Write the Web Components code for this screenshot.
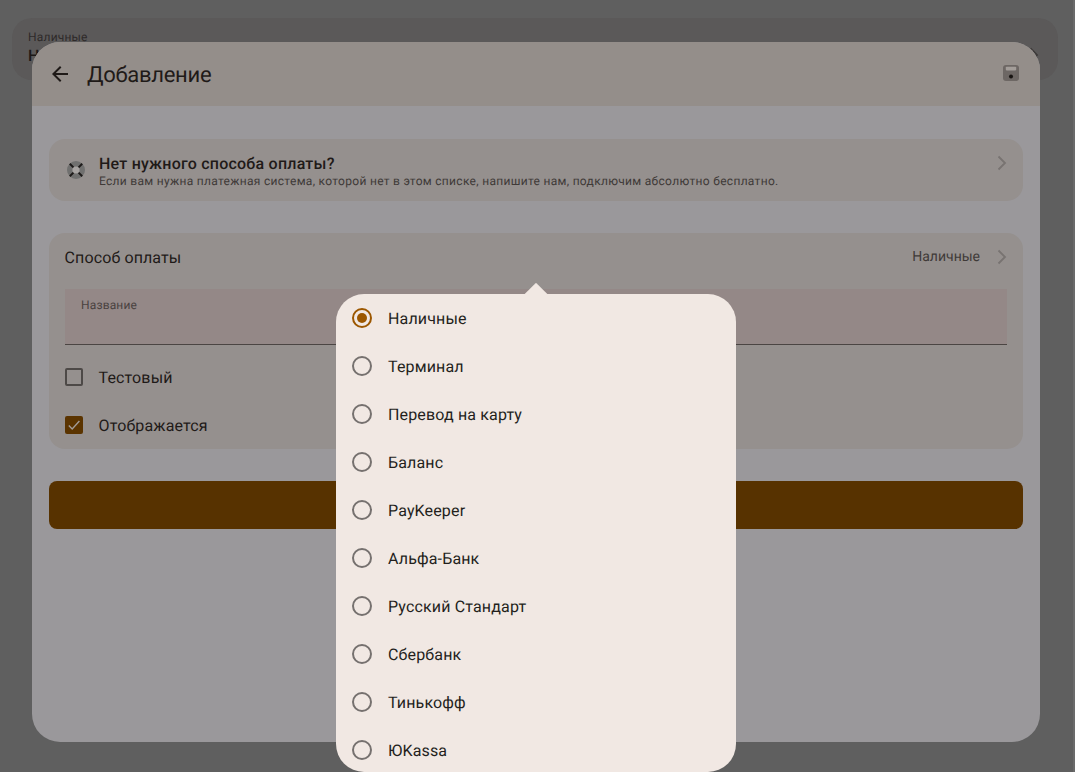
<!DOCTYPE html>
<html lang="ru"><head><meta charset="utf-8"><title>Добавление</title>
<style>
html,body{margin:0;padding:0;height:100%;overflow:hidden}
body{background:#5f5f5f;font-family:Roboto,"Liberation Sans",sans-serif;color:#211c1a;text-rendering:geometricPrecision}
</style></head><body>
<app-screen>
  <behind-card></behind-card>
  <add-dialog></add-dialog>
  <radio-menu></radio-menu>
</app-screen>
<script>
const chev='<svg width="24" height="24" viewBox="0 0 24 24" fill="none" stroke="#787371" stroke-width="1.8"><path d="M8.5 5.5l6.5 6.5-6.5 6.5"/></svg>';
function def(name,html){customElements.define(name,class extends HTMLElement{constructor(){super();this.attachShadow({mode:'open'}).innerHTML=html;}});}

def('app-screen',`<style>:host{display:block;position:relative;width:1075px;height:772px;overflow:hidden;background:#5f5f5f}
.sb{position:absolute;right:0;top:0;bottom:0;width:2px;background:#6a6a6a}</style><slot></slot><div class="sb"></div>`);

def('behind-card',`<style>:host{display:flex;box-sizing:border-box;position:absolute;left:12px;top:18px;width:1046px;height:62px;background:#5b5959;border-radius:20px;padding:11px 16px;align-items:flex-start;justify-content:space-between}
.s{font-size:12px;line-height:16px;color:#2e2a29;letter-spacing:.2px}.b{font-size:16px;line-height:22px;color:#1c1817;font-weight:500}
.c{margin:14px -4px 0 0}</style><div><div class="s">Наличные</div><div class="b">Наличные</div></div><div class="c">${chev.replace('#787371','#3d3a39')}</div>`);

def('add-dialog',`<style>:host{display:flex;flex-direction:column;position:absolute;left:32px;top:42px;width:1008px;height:700px;background:#9a989b;border-radius:28px;overflow:hidden}
header{height:64px;flex:none;background:#948e8a;display:flex;align-items:center;padding:0 20px 0 4px}
.ib{width:48px;height:48px;display:flex;align-items:center;justify-content:center}
h1{flex:1;margin:3px 0 0 3px;font-size:22px;font-weight:400;line-height:28px;color:#1f1a18;letter-spacing:-.3px}
.sv{margin-top:-2px}
main{flex:1;padding:33px 17px 0;display:flex;flex-direction:column;gap:32px}
</style>
<header><div class="ib"><svg width="24" height="24" viewBox="0 0 24 24" fill="#1f1a18"><path d="M20 11H7.83l5.59-5.59L12 4l-8 8 8 8 1.41-1.41L7.83 13H20v-2z"/></svg></div>
<h1>Добавление</h1>
<svg class="sv" width="18" height="18" viewBox="0 0 18 18"><rect x="1" y="1" width="16" height="16" rx="3" fill="#6d6764"/><rect x="3.8" y="2.8" width="10.4" height="3.6" rx=".8" fill="#a39d99"/><circle cx="9" cy="12.4" r="2" fill="#181412"/></svg>
</header>
<main><help-card></help-card><method-card></method-card><save-button></save-button></main>`);

def('help-card',`<style>:host{display:flex;height:62px;background:#95908e;border-radius:16px;padding:0 9px 0 16px;align-items:flex-start;box-sizing:border-box}
.i{width:22px;height:62px;display:flex;align-items:center;margin:0 12px 0 0}
.t{flex:1;padding-top:15px}
.a{font-size:16px;line-height:20px;font-weight:500;color:#1f1a18;letter-spacing:.22px}
.d{font-size:12px;line-height:16px;color:#3f3a38;margin-top:-1px;letter-spacing:.3px}
.c{margin-top:12px}</style>
<div class="i"><svg width="22" height="22" viewBox="0 0 22 22"><circle cx="11" cy="11" r="9" fill="#70706f"/><circle cx="11" cy="11" r="3.6" fill="#a8a4a2"/><path d="M4.8 4.8l3.6 3.6M17.2 4.8l-3.6 3.6M4.8 17.2l3.6-3.6M17.2 17.2l-3.6-3.6" stroke="#1d1a19" stroke-width="2"/></svg></div>
<div class="t"><div class="a">Нет нужного способа оплаты?</div><div class="d">Если вам нужна платежная система, которой нет в этом списке, напишите нам, подключим абсолютно бесплатно.</div></div>
<div class="c">${chev}</div>`);

def('method-card',`<style>:host{display:block;height:216px;background:#95908e;border-radius:16px;padding:0 16px;box-sizing:border-box}
.row{height:48px;display:flex;align-items:center;font-size:16px;color:#1f1a18}
.row span{flex:1;letter-spacing:.1px;margin-left:-.4px}.row b{font-weight:400;font-size:14px;color:#3f3a38;margin-right:10px}
.c{margin-right:-7px;height:24px}
.f{margin-top:8px;height:56px;box-sizing:border-box;background:#948887;border-bottom:1px solid #4b4543;padding:8px 16px;font-size:12px;line-height:16px;color:#4a4240;letter-spacing:.15px}
.chk{height:48px;display:flex;align-items:center;gap:15.5px;font-size:16px;color:#1f1a18;letter-spacing:.15px}
.first{margin-top:8px}
.box{width:18px;height:18px;box-sizing:border-box;border:2px solid #4d4947;border-radius:2px;flex:none}
.on{background:#5b3400;border:none;display:flex;align-items:center;justify-content:center}
</style>
<div class="row"><span>Способ оплаты</span><b>Наличные</b><div class="c">${chev}</div></div>
<div class="f">Название</div>
<div class="chk first"><div class="box"></div>Тестовый</div>
<div class="chk"><div class="box on"><svg width="14" height="14" viewBox="0 0 14 14" fill="none" stroke="#a29c98" stroke-width="1.4"><path d="M1.8 7.5l3.4 3.4L12.4 3"/></svg></div>Отображается</div>`);

def('save-button',`<style>:host{display:block;height:48px;background:#573200;border-radius:8px}</style>`);

def('radio-item',`<style>:host{display:flex;height:48px;align-items:center;padding-left:16px;gap:16px;font-size:16px;color:#241f1c;letter-spacing:.15px}
.r{width:20px;height:20px;box-sizing:border-box;border:2px solid #76716f;border-radius:50%;flex:none;display:flex;align-items:center;justify-content:center}
:host([on]) .r{border-color:#9c5700}
:host([on]) .r::after{content:"";width:10px;height:10px;border-radius:50%;background:#9c5700}
</style><div class="r"></div><slot></slot>`);

def('radio-menu',`<style>:host{display:block;position:absolute;left:336px;top:294px;width:400px;height:478px;background:#f1e8e3;border-radius:28px}
.arr{position:absolute;left:192px;top:-8px;width:16px;height:16px;background:#f1e8e3;transform:rotate(45deg);border-radius:1px 0 0 0}
.l{position:relative;height:478px;overflow:hidden;border-radius:28px}</style>
<div class="arr"></div><div class="l"><radio-item on>Наличные</radio-item><radio-item>Терминал</radio-item><radio-item>Перевод на карту</radio-item><radio-item>Баланс</radio-item><radio-item>PayKeeper</radio-item><radio-item>Альфа-Банк</radio-item><radio-item>Русский Стандарт</radio-item><radio-item>Сбербанк</radio-item><radio-item>Тинькофф</radio-item><radio-item>ЮKassa</radio-item></div>`);
</script>
</body></html>
